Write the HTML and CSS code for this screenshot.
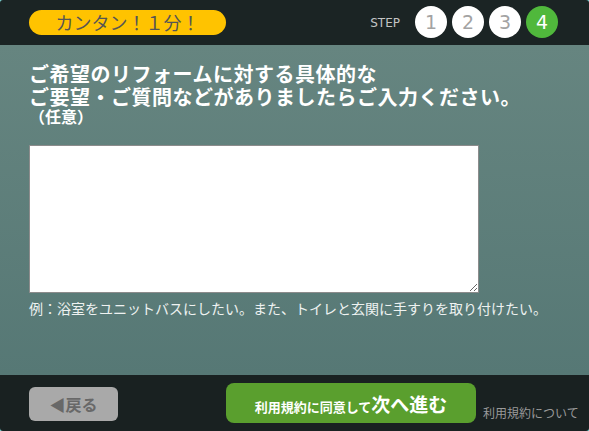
FILE: index.html
```html
<!DOCTYPE html>
<html lang="ja">
<head>
  <meta charset="UTF-8" />
  <meta name="viewport" content="width=device-width, initial-scale=1.0" />
  <title>ご要望・ご質問</title>
  <link rel="stylesheet" href="styles.css">
</head>
<body>
  <div class="modal">
    <div class="top-bar">
      <div class="easy-badge">カンタン！１分！</div>
      <div class="steps">
        <span class="step-label">STEP</span>
        <span class="step-num">1</span>
        <span class="step-num">2</span>
        <span class="step-num">3</span>
        <span class="step-num active">4</span>
      </div>
    </div>

    <div class="content">
      <h2 class="question">ご希望のリフォームに対する具体的な<br>ご要望・ご質問などがありましたらご入力ください。</h2>
      <p class="optional">（任意）</p>
      <textarea class="request-box"></textarea>
      <p class="example">例：浴室をユニットバスにしたい。また、トイレと玄関に手すりを取り付けたい。</p>
    </div>

    <div class="bottom-bar">
      <button class="back-btn">◀戻る</button>
      <button class="next-btn"><span class="agree">利用規約に同意して</span>次へ進む</button>
      <a class="terms-link" href="#">利用規約について</a>
    </div>
  </div>
</body>
</html>
```

FILE: styles.css
```css
* {
  box-sizing: border-box;
}

html, body {
  margin: 0;
  padding: 0;
  background: #7fd8d8;
}

body {
  font-family: "Noto Sans CJK JP", sans-serif;
}

.modal {
  width: 589px;
  height: 431px;
  display: flex;
  flex-direction: column;
  border-radius: 3px;
  overflow: hidden;
}

.top-bar {
  height: 45px;
  flex: none;
  background: #1b2424;
  display: flex;
  align-items: center;
  justify-content: space-between;
  padding: 0 31px 0 29px;
}

.easy-badge {
  width: 197px;
  height: 25px;
  border-radius: 13px;
  background: #ffc300;
  color: #555;
  font-size: 18px;
  line-height: 25px;
  text-align: center;
}

.steps {
  display: flex;
  align-items: center;
  gap: 5px;
  margin-top: -2px;
}

.step-label {
  font-family: "DejaVu Sans", sans-serif;
  font-size: 12px;
  color: #c4c4c4;
  margin-right: 10px;
  margin-top: 2px;
}

.step-num {
  width: 32px;
  height: 32px;
  border-radius: 50%;
  background: #fff;
  color: #a3a3a3;
  font-family: "DejaVu Sans", sans-serif;
  font-size: 19px;
  line-height: 32px;
  text-align: center;
}

.step-num.active {
  background: #50b83c;
  color: #fff;
}

.content {
  flex: 1;
  background: linear-gradient(#668580, #567875);
  padding: 0 29px;
}

.question {
  margin: 17px 0 0;
  font-size: 20px;
  line-height: 23px;
  font-weight: bold;
  letter-spacing: 0.5px;
  color: #fff;
}

.optional {
  margin: 0;
  font-size: 16px;
  line-height: 16px;
  font-weight: bold;
  color: #fff;
}

.request-box {
  display: block;
  width: 450px;
  height: 148px;
  margin-top: 21px;
  border: 1px solid #8c8c8c;
  background: #fff;
  padding: 4px;
  font-family: inherit;
}

.example {
  margin: 5px 0 0;
  font-size: 14px;
  line-height: 20px;
  color: #eef2f1;
}

.bottom-bar {
  height: 56px;
  flex: none;
  background: #192121;
  display: flex;
  align-items: center;
  padding-left: 29px;
}

.back-btn {
  width: 89px;
  height: 34px;
  border: none;
  border-radius: 6px;
  background: #a9a9a9;
  color: #686868;
  font-family: inherit;
  font-size: 16px;
  font-weight: bold;
  padding: 0;
  margin-top: 2px;
}

.next-btn {
  width: 250px;
  height: 40px;
  margin-left: 108px;
  border: none;
  border-radius: 8px;
  background: #5a9f2e;
  color: #fff;
  font-family: inherit;
  font-size: 19px;
  font-weight: bold;
  padding: 0;
}

.agree {
  font-size: 13px;
}

.terms-link {
  align-self: flex-end;
  margin: 0 0 10px 7px;
  font-size: 12px;
  line-height: 16px;
  color: #9a9a9a;
  text-decoration: none;
}
```
